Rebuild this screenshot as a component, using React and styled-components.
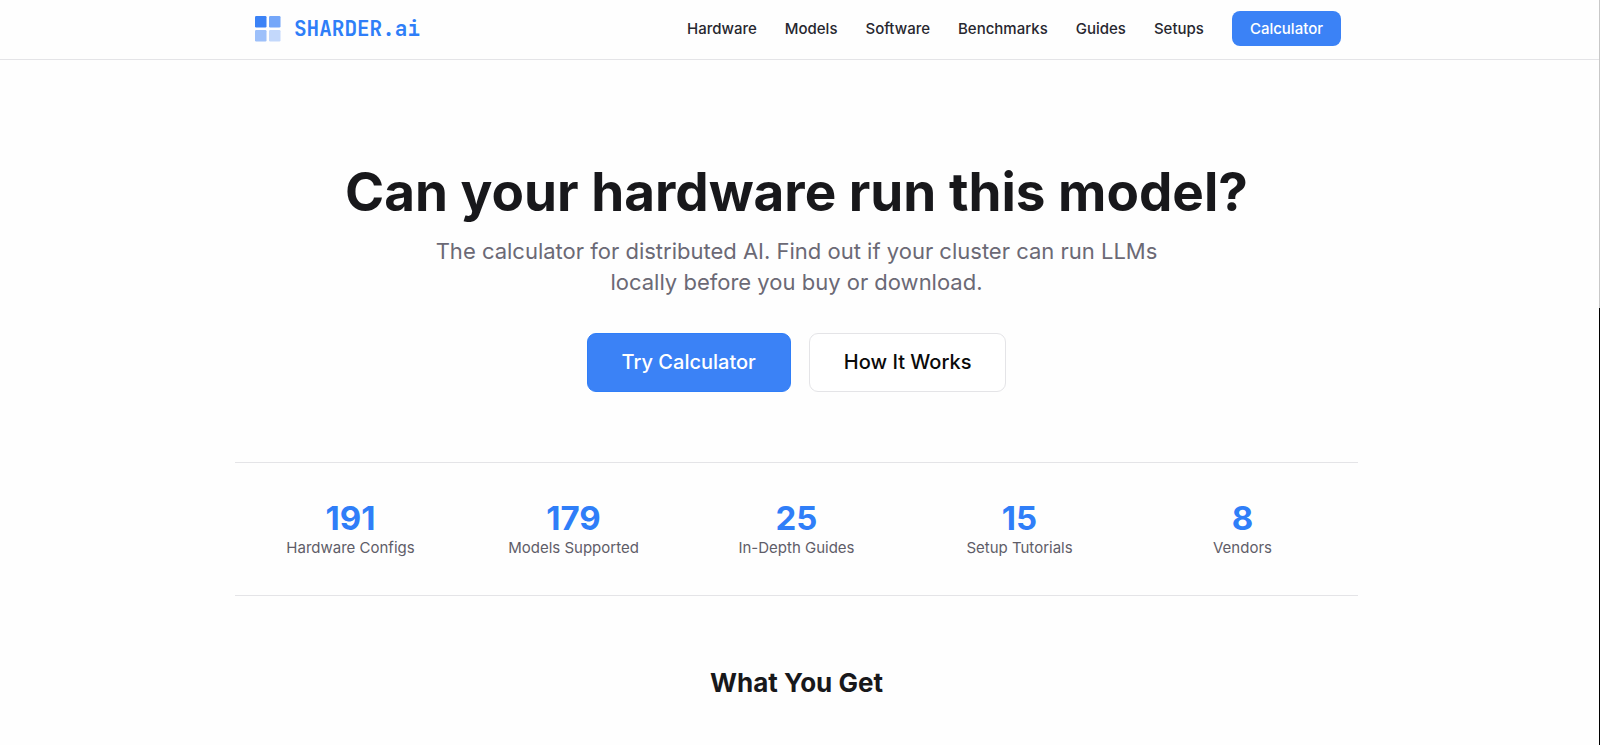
import React from 'react';
import styled, {createGlobalStyle} from 'styled-components';

const COLORS = {
  blue: '#3b82f6',
  brightBlue: '#2f7ef8',
  ink: '#18181b',
  nav: '#27272f',
  muted: '#6b6975',
  label: '#5f5d68',
  line: '#e4e4e7',
  page: '#fefefe',
};

const NAV_LINKS = ['Hardware', 'Models', 'Software', 'Benchmarks', 'Guides', 'Setups'];

const STATS = [
  {value: 191, label: 'Hardware Configs'},
  {value: 179, label: 'Models Supported'},
  {value: 25, label: 'In-Depth Guides'},
  {value: 15, label: 'Setup Tutorials'},
  {value: 8, label: 'Vendors'},
];

const App = () => (
  <>
    <GlobalStyle />
    <Header>
      <HeaderInner>
        <Brand href="#home">
          <LogoMark />
          SHARDER.ai
        </Brand>
        <Nav>
          {NAV_LINKS.map(name => (
            <NavLink key={name} href={`#${name.toLowerCase()}`}>
              {name}
            </NavLink>
          ))}
          <NavButton href="#calculator">Calculator</NavButton>
        </Nav>
      </HeaderInner>
    </Header>
    <Main>
      <Hero>
        <Title>Can your hardware run this model?</Title>
        <Subtitle>
          The calculator for distributed AI. Find out if your cluster can run LLMs locally before
          you buy or download.
        </Subtitle>
        <Actions>
          <ActionLink href="#calculator" $primary>
            Try Calculator
          </ActionLink>
          <ActionLink href="#how-it-works">How It Works</ActionLink>
        </Actions>
      </Hero>
      <Stats>
        {STATS.map(({value, label}) => (
          <Stat key={label}>
            <StatValue>{value}</StatValue>
            <StatLabel>{label}</StatLabel>
          </Stat>
        ))}
      </Stats>
      <SectionTitle>What You Get</SectionTitle>
    </Main>
    <ScrollEdge />
  </>
);

// Four tiles, fading from solid to pale
const LogoMark = () => (
  <svg width="26" height="26" viewBox="0 0 26 26" aria-hidden="true">
    <rect x="0" y="0" width="11.5" height="11.5" rx="1.2" fill="#3b82f6" />
    <rect x="14" y="0" width="11.5" height="11.5" rx="1.2" fill="#3b82f6" opacity="0.7" />
    <rect x="0" y="14" width="11.5" height="11.5" rx="1.2" fill="#3b82f6" opacity="0.5" />
    <rect x="14" y="14" width="11.5" height="11.5" rx="1.2" fill="#3b82f6" opacity="0.3" />
  </svg>
);

const GlobalStyle = createGlobalStyle`
  *, *::before, *::after {
    box-sizing: border-box;
  }
  body {
    margin: 0;
    background: ${COLORS.page};
    color: ${COLORS.ink};
    font-family: Inter, 'Liberation Sans', sans-serif;
    -webkit-font-smoothing: antialiased;
  }
  a {
    text-decoration: none;
  }
`;

const Header = styled.header`
  padding-right: 7px;
  border-bottom: 1px solid ${COLORS.line};
`;

const HeaderInner = styled.div`
  display: flex;
  align-items: center;
  justify-content: space-between;
  max-width: 1123px;
  margin: 0 auto;
  padding: 11px 17px 13px 20px;
`;

const Brand = styled.a`
  display: flex;
  align-items: center;
  gap: 13px;
  color: ${COLORS.brightBlue};
  font-family: 'JetBrains Mono', 'DejaVu Sans Mono', monospace;
  font-size: 21px;
  font-weight: 700;
  line-height: 26px;
`;

const Nav = styled.nav`
  display: flex;
  align-items: center;
  gap: 28px;
`;

const NavLink = styled.a`
  color: ${COLORS.nav};
  font-size: 15px;
  font-weight: 500;
  line-height: 19px;
`;

const NavButton = styled(NavLink)`
  padding: 8px 18px;
  border-radius: 8px;
  background: ${COLORS.blue};
  color: #fff;
`;

const Main = styled.main`
  padding-right: 7px;
`;

const Hero = styled.section`
  display: flex;
  flex-direction: column;
  align-items: center;
  padding: 99px 20px 70px;
  text-align: center;
`;

const Title = styled.h1`
  margin: 0;
  font-size: 53px;
  font-weight: 700;
  line-height: 66px;
`;

const Subtitle = styled.p`
  max-width: 760px;
  margin: 11px 0 0;
  color: ${COLORS.muted};
  font-size: 22px;
  line-height: 31px;
`;

const Actions = styled.div`
  display: flex;
  gap: 18px;
  margin-top: 35px;
`;

const ActionLink = styled.a`
  padding: 16px 34px;
  border: 1px solid ${({$primary}) => ($primary ? COLORS.brightBlue : COLORS.line)};
  border-radius: 9px;
  background: ${({$primary}) => ($primary ? COLORS.blue : '#fff')};
  color: ${({$primary}) => ($primary ? '#fff' : '#0a0a0a')};
  font-size: 20px;
  font-weight: 500;
  line-height: 25px;
`;

const Stats = styled.section`
  display: grid;
  grid-template-columns: repeat(5, 1fr);
  gap: 32px;
  max-width: 1123px;
  margin: 0 auto;
  padding: 36px 20px;
  border-top: 1px solid ${COLORS.line};
  border-bottom: 1px solid ${COLORS.line};
`;

const Stat = styled.div`
  text-align: center;
`;

const StatValue = styled.div`
  color: ${COLORS.brightBlue};
  font-size: 33px;
  font-weight: 700;
  line-height: 38px;
`;

const StatLabel = styled.div`
  color: ${COLORS.label};
  font-size: 15px;
  line-height: 22px;
`;

const SectionTitle = styled.h2`
  margin: 70px 0 0;
  padding-bottom: 44px;
  font-size: 26px;
  font-weight: 700;
  line-height: 34px;
  text-align: center;
`;

// Hairline scroll track on the right edge of the window
const ScrollEdge = styled.div`
  position: fixed;
  top: 0;
  right: 0;
  bottom: 0;
  width: 1px;
  background: #000;

  &::before {
    content: '';
    display: block;
    height: 308px;
    background: #c8c8c8;
  }
`;

export default App;
